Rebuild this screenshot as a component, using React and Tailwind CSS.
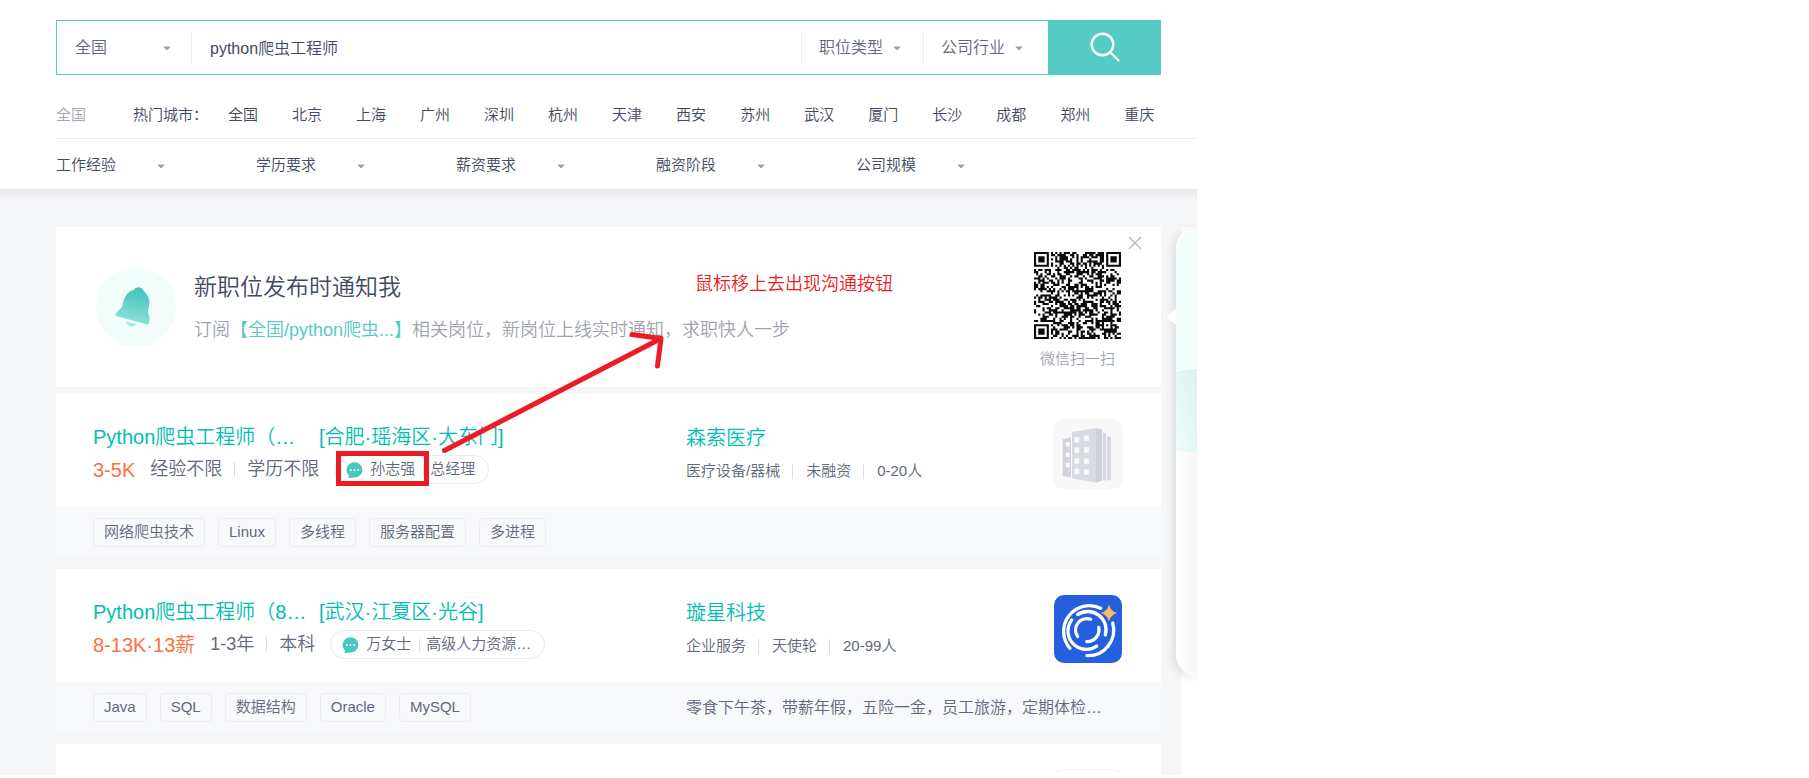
import React from "react";

const CITIES = ["全国", "北京", "上海", "广州", "深圳", "杭州", "天津", "西安", "苏州", "武汉", "厦门", "长沙", "成都", "郑州", "重庆"];
const FILTERS = ["工作经验", "学历要求", "薪资要求", "融资阶段", "公司规模"];

const JOBS = [
  {
    title: "Python爬虫工程师（…",
    place: "[合肥·瑶海区·大东门]",
    salary: "3-5K",
    experience: "经验不限",
    degree: "学历不限",
    contact: "孙志强",
    role: "总经理",
    company: "森索医疗",
    info: ["医疗设备/器械", "未融资", "0-20人"],
    tags: ["网络爬虫技术", "Linux", "多线程", "服务器配置", "多进程"],
    benefits: "",
    logo: BuildingLogo,
  },
  {
    title: "Python爬虫工程师（8…",
    place: "[武汉·江夏区·光谷]",
    salary: "8-13K·13薪",
    experience: "1-3年",
    degree: "本科",
    contact: "万女士",
    role: "高级人力资源…",
    company: "璇星科技",
    info: ["企业服务", "天使轮", "20-99人"],
    tags: ["Java", "SQL", "数据结构", "Oracle", "MySQL"],
    benefits: "零食下午茶，带薪年假，五险一金，员工旅游，定期体检…",
    logo: RingsLogo,
  },
];

function Caret() {
  return (
    <svg width="8" height="5" viewBox="0 0 8 5" className="mt-0.5 shrink-0" aria-hidden="true">
      <path d="M0.200 0.500h7.600L4.800 3.800Q4 4.600 3.200 3.800z" fill="#9a9eae" />
    </svg>
  );
}

function Dropdown({ label, className }) {
  return (
    <label className="flex items-center">
      <select aria-label={label} className={"appearance-none bg-transparent outline-none " + className}>
        <option>{label}</option>
      </select>
      <Caret />
    </label>
  );
}

function BuildingLogo() {
  const windows = [
    [23.7, 20.7], [23.7, 31], [23.7, 42], [23.7, 52.3],
    [33.3, 19.3], [33.3, 31], [33.3, 42.3], [33.3, 53],
  ];
  const side = [25.3, 35.7, 46];
  return (
    <svg width="70" height="70" viewBox="0 0 70 70" aria-hidden="true">
      <rect width="70" height="70" rx="11" fill="#f8f8f9" />
      <path d="M9.7 20.3 18 18.5v40L9.7 57z" fill="#d1d4dc" />
      <path d="M54 17l4 1v43l-4 .5zM50 13.7l3 .8v47h-3z" fill="#d5d8e0" />
      <path d="M19 13 43 9v54.5l-24-4z" fill="#d8dbe2" />
      <path d="M43 9l6.3 1.7v51L43 63.5z" fill="#cdd1da" />
      {windows.map(([x, y]) => (
        <rect key={x + "-" + y} x={x - 2.3} y={y - 2.8} width="4.8" height="5.6" rx="0.6" fill="#fafafa" />
      ))}
      {side.map((y) => (
        <rect key={y} x="12.8" y={y - 2.2} width="3.8" height="4.4" rx="0.6" fill="#fafafa" />
      ))}
    </svg>
  );
}

function RingsLogo() {
  return (
    <svg width="70" height="70" viewBox="-1 -1 70 70" aria-hidden="true">
      <rect width="68" height="68" rx="10" fill="#245fdd" />
      <g fill="none" stroke="#fff" strokeWidth="3.3" strokeLinecap="round">
        <path d="M46.7 13.3A25.7 25.7 0 0 0 16 53.3" />
        <path d="M58.7 28A25.7 25.7 0 0 1 33 60.7" />
        <path d="M23.7 19.5A18.3 18.3 0 0 1 51.3 40" />
        <path d="M17.7 25A18.3 18.3 0 0 0 42.7 51.1" />
        <path d="M36.7 24.3A11.3 11.3 0 0 0 23.7 41.5" />
        <path d="M44.7 32.3A11.8 11.8 0 0 1 32.7 46.6" />
      </g>
      <path d="M55 9.5q1.6 7 8.5 8.5q-6.900 1.500-8.500 8.500q-1.600-7-8.500-8.500q6.900-1.500 8.500-8.500z" fill="#fdb960" />
    </svg>
  );
}

function Bell() {
  return (
    <svg width="80" height="80" viewBox="0 0 80 80" className="shrink-0" aria-hidden="true">
      <defs>
        <linearGradient id="bell" x1="0.6" y1="0" x2="0.4" y2="1">
          <stop offset="0" stopColor="#3fc4bb" />
          <stop offset="1" stopColor="#93e2db" />
        </linearGradient>
      </defs>
      <circle cx="40" cy="40" r="40" fill="#f2fcfb" />
      <path
        d="M38 23C39.500 19.300 45.500 18.800 48 24.500C52.500 28 54.300 33.500 53 39C52 43.500 51.500 46 53.500 49.500L53 56.500Q52.500 57.800 51 57.400L20.800 49.300Q19 48.600 19.800 47C21.500 43.500 25.500 42.500 26.500 38C28 31 30.500 24.500 38 23Z"
        fill="url(#bell)"
      />
      <path d="M30 54.500L40.500 57.300Q37.500 60.200 34 59.200Q31 58 30 54.500Z" fill="#a5e8e3" />
    </svg>
  );
}

const QR_SIZE = 41;

function qrPath() {
  let d = "";
  let seed = 20231;
  const inFinder = (x, y) => (x < 8 && y < 8) || (x > QR_SIZE - 9 && y < 8) || (x < 8 && y > QR_SIZE - 9);
  for (let y = 0; y < QR_SIZE; y++) {
    for (let x = 0; x < QR_SIZE; x++) {
      seed = (seed * 1103515245 + 12345) % 2147483648;
      let dark = (seed >> 16) % 100 < 50;
      const ax = Math.abs(x - 34);
      const ay = Math.abs(y - 34);
      if (ax < 3 && ay < 3) dark = Math.max(ax, ay) !== 1;
      else if (x === 6 || y === 6) dark = (x + y) % 2 === 0;
      if (dark && !inFinder(x, y)) d += `M${x} ${y}h1v1h-1z`;
    }
  }
  [[0, 0], [QR_SIZE - 7, 0], [0, QR_SIZE - 7]].forEach(([x, y]) => {
    d += `M${x} ${y}h7v7h-7zM${x + 1} ${y + 1}v5h5v-5zM${x + 2} ${y + 2}h3v3h-3z`;
  });
  return d;
}

function QrCode() {
  return (
    <svg width="87" height="87" viewBox={`0 0 ${QR_SIZE} ${QR_SIZE}`} aria-hidden="true">
      <path d={qrPath()} fill="#0a0a0a" />
    </svg>
  );
}

function ChatIcon() {
  return (
    <svg width="17" height="16" viewBox="0 0 17 16" className="mt-px shrink-0" aria-hidden="true">
      <path d="M8.500 0.200a7.900 7.700 0 1 1 0 15.400Q5.500 16 2.400 15.900Q3.200 14.500 2.600 13A7.900 7.700 0 0 1 8.500 0.200Z" fill="#48c8c1" />
      <circle cx="4.900" cy="8" r="0.900" fill="#fff" />
      <circle cx="8.500" cy="8" r="0.900" fill="#fff" />
      <circle cx="12.100" cy="8" r="0.900" fill="#fff" />
    </svg>
  );
}

function Header() {
  return (
    <header className="bg-white pl-14 pt-5 text-[#414a60]">
      <form className="mr-9 flex h-[55px] border border-[#53cac3] text-base" onSubmit={(e) => e.preventDefault()}>
        <div className="flex flex-1 items-center">
          <div className="pl-[18px] pr-5 text-[#61687c]">
            <Dropdown label="全国" className="w-[88px]" />
          </div>
          <input
            aria-label="搜索职位"
            defaultValue="python爬虫工程师"
            className="h-8 min-w-0 flex-1 border-l border-[#ededf0] pb-0.5 pl-[18px] outline-none"
          />
          <div className="flex h-8 items-center border-l border-[#ededf0] pl-[17px] pr-[22px] text-[#61687c]">
            <Dropdown label="职位类型" className="w-[74px]" />
          </div>
          <div className="flex h-8 items-center border-l border-[#ededf0] pl-[17px] pr-[25px] text-[#61687c]">
            <Dropdown label="公司行业" className="w-[74px]" />
          </div>
        </div>
        <button aria-label="搜索" className="-my-px -mr-px flex w-[113px] items-center justify-center bg-[#56cbc4]">
          <svg width="30" height="30" viewBox="0 0 30 30" fill="none" stroke="#fff" strokeWidth="2.400" className="mb-0.5" aria-hidden="true">
            <circle cx="12.500" cy="12.500" r="10.800" />
            <path d="M20.500 20.500L28.500 28.500" strokeLinecap="round" />
          </svg>
        </button>
      </form>

      <nav className="flex h-16 items-center whitespace-nowrap border-b border-[#ededf0] pt-[18px] text-[15px]">
        <a href="#all" className="w-[77px] text-[#a5a8b4]">全国</a>
        <span className="w-[95px]">热门城市：</span>
        <div className="flex gap-[34px]">
          {CITIES.map((c) => (
            <a key={c} href={"#" + c}>{c}</a>
          ))}
        </div>
      </nav>

      <div className="flex h-[50px] items-center pt-0.5 text-[15px]">
        {FILTERS.map((f) => (
          <div key={f} className="w-[200px]">
            <Dropdown label={f} className="w-[101px]" />
          </div>
        ))}
      </div>
    </header>
  );
}

function AlertCard() {
  return (
    <section className="relative mb-[7px] flex h-40 items-center bg-white px-10">
      <Bell />
      <div className="ml-[18px] flex flex-col gap-[13px]">
        <h2 className="text-[23px] leading-8 text-[#414a60]">新职位发布时通知我</h2>
        <p className="text-[18px] leading-7 text-[#9fa3b0]">
          订阅<span className="text-[#53cac3]">【全国/python爬虫...】</span>相关岗位，新岗位上线实时通知，求职快人一步
        </p>
      </div>
      <div className="ml-auto flex flex-col items-center gap-[10px] self-start pt-[25px]">
        <QrCode />
        <span className="text-[15px] leading-5 text-[#9fa3b0]">微信扫一扫</span>
      </div>
      <button aria-label="关闭" className="absolute right-[19px] top-[9px]">
        <svg width="14" height="14" viewBox="0 0 14 14" stroke="#b9bdc9" strokeWidth="1.500" aria-hidden="true">
          <path d="M1 1L13 13M13 1L1 13" />
        </svg>
      </button>
      <span className="absolute left-[639px] top-[43px] text-[18px] leading-7 text-[#ed1c24]">鼠标移上去出现沟通按钮</span>
    </section>
  );
}

function Rule({ className }) {
  return <span className={"w-px bg-[#dcdde1] " + className} />;
}

function JobCard({ job }) {
  const Logo = job.logo;
  return (
    <article className="mb-3 bg-white">
      <div className="flex h-[113px] pl-[37px] pr-[38px]">
        <div className="w-[593px] shrink-0 whitespace-nowrap pt-[29px]">
          <a href="#job" className="flex text-xl leading-7 text-[#00beb3]">
            <span className="w-[226px]">{job.title}</span>
            <span>{job.place}</span>
          </a>
          <div className="mt-1 flex h-[29px] items-center text-[18px] text-[#61687c]">
            <span className="mr-[15px] text-xl text-[#fc703e]">{job.salary}</span>
            <span>{job.experience}</span>
            <Rule className="mx-3 h-[15px]" />
            <span>{job.degree}</span>
            <button className="ml-[15px] flex h-[29px] items-center rounded-full border border-[#e9eaee] pl-[11px] pr-[13px] text-[15px]">
              <ChatIcon />
              <span className="ml-[7px]">{job.contact}</span>
              <Rule className="ml-2 mr-[6px] h-3" />
              <span>{job.role}</span>
            </button>
          </div>
        </div>
        <div className="flex-1 pt-[30px]">
          <a href="#company" className="block text-xl leading-7 text-[#00beb3]">{job.company}</a>
          <div className="mt-[7px] flex items-center text-[15px] leading-6 text-[#61687c]">
            {job.info.map((t, i) => (
              <React.Fragment key={t}>
                {i > 0 && <Rule className="ml-3 mr-[13px] h-[15px]" />}
                <span>{t}</span>
              </React.Fragment>
            ))}
          </div>
        </div>
        <div className="pt-[25px]">
          <Logo />
        </div>
      </div>
      <div className="flex h-[50px] items-center bg-[#f8f9fd] pl-[37px] text-[#61687c]">
        <div className="flex w-[593px] shrink-0 gap-[13px] text-[15px]">
          {job.tags.map((t) => (
            <span key={t} className="flex h-[29px] items-center rounded-sm border border-[#ededf1] px-[10px]">{t}</span>
          ))}
        </div>
        <p className="whitespace-nowrap pt-0.5 text-base">{job.benefits}</p>
      </div>
    </article>
  );
}

function SidePanel() {
  return (
    <aside className="relative w-4 shrink-0 bg-white">
      <div className="absolute -left-[5px] right-0 top-0 h-[449px] rounded-l-[30px] bg-gradient-to-r from-white to-[#f7f7f8] shadow-[-3px_2px_10px_rgba(0,0,0,0.1)]">
        <svg width="31" height="449" viewBox="-10 0 31 449" className="absolute -left-[10px] top-0" aria-hidden="true">
          <defs>
            <linearGradient id="band" x1="0" y1="1" x2="1" y2="0">
              <stop offset="0" stopColor="#effcfa" />
              <stop offset="1" stopColor="#d9f3ef" />
            </linearGradient>
          </defs>
          <path d="M0 82L-8.500 88Q-10 89.500-8.500 91L0 98Z" fill="#fff" />
          <path d="M21 1Q0 8 0 32V142H21Z" fill="#f3fdfc" />
          <path d="M0 145Q8 142 21 142V225Q8 226 0 223Z" fill="url(#band)" />
        </svg>
      </div>
    </aside>
  );
}

function Annotation() {
  return (
    <svg width="341" height="160" viewBox="330 330 341 160" className="pointer-events-none absolute left-[330px] top-[141px]" fill="none" stroke="#ed1c24" aria-hidden="true">
      <rect x="338.500" y="453.500" width="88" height="30" strokeWidth="5" />
      <path d="M444.500 450.500L660 339" strokeWidth="5" strokeLinecap="round" />
      <path d="M632 334.500L661 338.500L657.500 366" strokeWidth="5" strokeLinecap="round" strokeLinejoin="round" />
    </svg>
  );
}

export default function App() {
  return (
    <div className="min-h-screen bg-white font-['Liberation_Sans','Noto_Sans_CJK_SC',sans-serif] font-[350]">
      <div className="w-2/3 max-w-[1197px]">
        <Header />
        <main className="relative flex gap-5 overflow-hidden bg-[#f5f6f8] pl-14 pt-[38px]">
          <div className="absolute inset-x-0 top-0 h-3 bg-gradient-to-b from-[#e9e9eb] to-[#f5f6f8]" />
          <div className="min-w-0 flex-1">
            <AlertCard />
            {JOBS.map((j) => (
              <JobCard key={j.company} job={j} />
            ))}
            <article className="flex h-[31px] justify-end overflow-hidden bg-white pr-[38px] pt-[25px]">
              <span className="size-[70px] shrink-0 rounded-[11px] border border-[#f0f0f3]" />
            </article>
          </div>
          <SidePanel />
          <Annotation />
        </main>
      </div>
    </div>
  );
}
